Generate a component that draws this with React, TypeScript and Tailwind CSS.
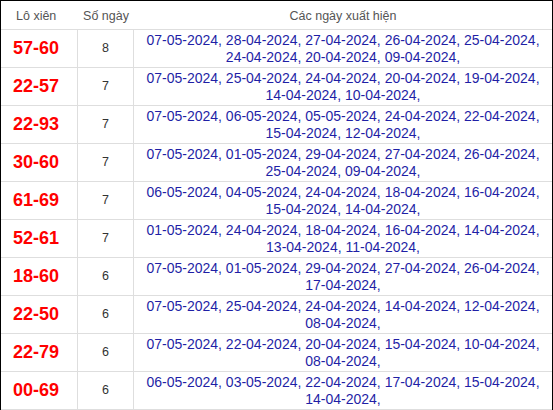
import React from 'react';

type Row = { pair: string; count: number; dates: string[] };

const ROWS: Row[] = [
  { pair: '57-60', count: 8, dates: ['07-05-2024', '28-04-2024', '27-04-2024', '26-04-2024', '25-04-2024', '24-04-2024', '20-04-2024', '09-04-2024'] },
  { pair: '22-57', count: 7, dates: ['07-05-2024', '25-04-2024', '24-04-2024', '20-04-2024', '19-04-2024', '14-04-2024', '10-04-2024'] },
  { pair: '22-93', count: 7, dates: ['07-05-2024', '06-05-2024', '05-05-2024', '24-04-2024', '22-04-2024', '15-04-2024', '12-04-2024'] },
  { pair: '30-60', count: 7, dates: ['07-05-2024', '01-05-2024', '29-04-2024', '27-04-2024', '26-04-2024', '25-04-2024', '09-04-2024'] },
  { pair: '61-69', count: 7, dates: ['06-05-2024', '04-05-2024', '24-04-2024', '18-04-2024', '16-04-2024', '15-04-2024', '14-04-2024'] },
  { pair: '52-61', count: 7, dates: ['01-05-2024', '24-04-2024', '18-04-2024', '16-04-2024', '14-04-2024', '13-04-2024', '11-04-2024'] },
  { pair: '18-60', count: 6, dates: ['07-05-2024', '01-05-2024', '29-04-2024', '27-04-2024', '26-04-2024', '17-04-2024'] },
  { pair: '22-50', count: 6, dates: ['07-05-2024', '25-04-2024', '24-04-2024', '14-04-2024', '12-04-2024', '08-04-2024'] },
  { pair: '22-79', count: 6, dates: ['07-05-2024', '22-04-2024', '20-04-2024', '15-04-2024', '10-04-2024', '08-04-2024'] },
  { pair: '00-69', count: 6, dates: ['06-05-2024', '03-05-2024', '22-04-2024', '17-04-2024', '15-04-2024', '14-04-2024'] },
];

export default function App() {
  return (
    <div className="w-[553px] h-[410px] bg-white border-t border-l border-r border-black overflow-hidden font-['Liberation_Sans',Arial,sans-serif]">
      {/* Header */}
      <div className="flex h-[29px] border-b border-[#dedede] text-[12.5px] text-[#555]">
        <div className="w-[77px] shrink-0 flex items-center pl-[15px] pt-[3px]">Lô xiên</div>
        <div className="w-[56px] shrink-0 flex items-center justify-center pt-[3px]">Số ngày</div>
        <div className="flex-1 flex items-center justify-center pt-[3px]">Các ngày xuất hiện</div>
      </div>

      {/* Rows */}
      {ROWS.map((row) => (
        <div key={row.pair} className="flex h-[38px] border-b border-[#dedede]">
          <div className="w-[77px] shrink-0 border-r border-[#dedede] flex items-center pl-[12px] text-[18px] font-bold text-[#ff0000]">
            {row.pair}
          </div>
          <div className="w-[56px] shrink-0 border-r border-[#dedede] flex items-center justify-center text-[12.5px] text-[#333]">
            {row.count}
          </div>
          <div className="flex-1 flex items-center justify-center px-[8px] text-center text-[14px] leading-[17px] text-[#1f1fa6]">
            <span>{row.dates.map((d) => `${d},`).join(' ')}</span>
          </div>
        </div>
      ))}
    </div>
  );
}
